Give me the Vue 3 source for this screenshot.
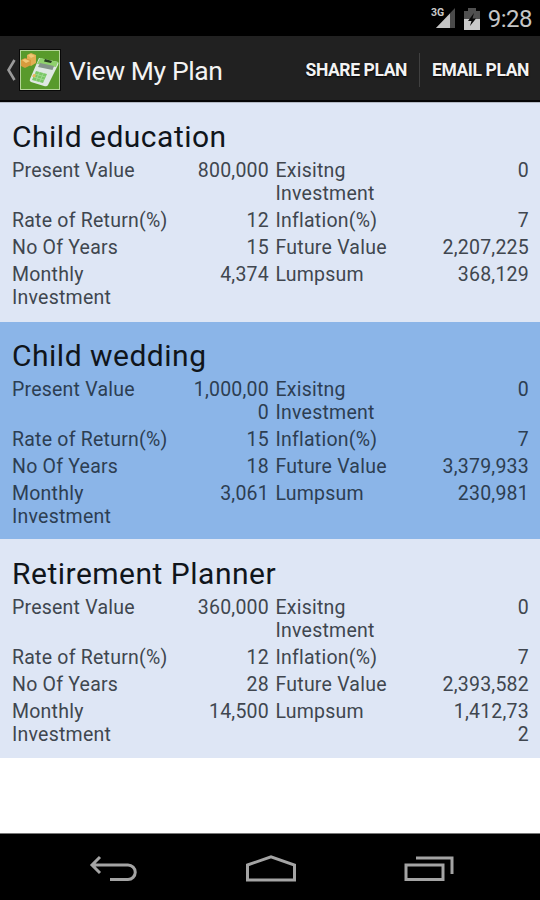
<template>
  <div class="screen">
    <header class="status-bar">
      <svg class="signal" width="26" height="24" viewBox="0 0 26 24">
        <path d="M5 21 L24 1 V21 Z" fill="#4a4a4a" />
        <path d="M5 21 L19 6.500 V21 Z" fill="#c4c4c4" />
        <text x="0" y="9" class="network">3G</text>
      </svg>
      <svg class="battery" width="16" height="22" viewBox="0 0 16 22">
        <path d="M4 0 H12 V3 H16 V11 H0 V3 H4 Z" fill="#505050" />
        <path d="M0 11 H16 V22 H0 Z" fill="#c9c9c9" />
        <path d="M10 5 L4 13 H7.500 L6 18 L12 10.500 H8.500 Z" fill="#080808" />
      </svg>
      <span class="clock">9:28</span>
    </header>

    <nav class="action-bar">
      <svg class="up" width="10" height="22" viewBox="0 0 10 22">
        <path d="M8.500 1 L2.500 11 L8.500 21" fill="none" stroke="#9a9a9a" stroke-width="2.600" />
      </svg>
      <svg class="logo" width="42" height="42" viewBox="0 0 42 42">
        <rect width="42" height="42" fill="#080808" />
        <rect x="1" y="1" width="40" height="40" fill="#b5d59a" />
        <rect x="2" y="2" width="38" height="38" fill="#589a2b" />
        <path d="M8 6 L12 4 L17 6 V14 L12 17 L8 14 Z" fill="#e2ae52" />
        <path d="M2 11 L6 9 L12 11 V16 L6 19 L2 17 Z" fill="#d69b3d" />
        <path d="M9 6 L12 5 L16 7 L12 9 Z M3 11 L6 10 L11 12 L7 14 Z" fill="#f0c977" />
        <path d="M20 9 L39 13 Q40 14 39 16 L29 36 Q28 38 25 37 L12 33 Q10 32 11 30 Z" fill="#dfe8e3" />
        <path d="M21 9 L39 13 L37 18 L18 15 Z" fill="#8fd16c" />
        <path d="M26 10 L33 12 L32 14 L25 12.500 Z" fill="#263d20" />
        <path d="M21 14 L35 17 L33.500 21 L19 18 Z" fill="#84958a" />
        <path d="M17 22 L28 25 L24 34 L13 31 Z" fill="#79c765" />
        <path d="M16 25 L26.500 28 M15 28 L25 31 M20.500 23 L17 32 M24.500 24 L20.500 33" stroke="#a5dc95" stroke-width=".8" />
        <path d="M14.500 25 L17 25.600 L16 28.500 L13 27.500 Z" fill="#e9b75d" />
      </svg>
      <h1 class="page-title">View My Plan</h1>
      <button class="action share">SHARE PLAN</button>
      <span class="divider" />
      <button class="action email">EMAIL PLAN</button>
    </nav>

    <main class="plans">
      <section v-for="(plan, i) in plans" :key="plan.name" class="plan" :class="{ alt: i % 2 === 1 }">
        <h2 class="plan-name">{{ plan.name }}</h2>
        <div v-for="row in plan.rows" :key="row[0]" class="row">
          <span class="label">{{ row[0] }}</span>
          <span class="value">{{ row[1] }}</span>
          <span class="label second">{{ row[2] }}</span>
          <span class="value">{{ row[3] }}</span>
        </div>
      </section>
    </main>

    <footer class="nav-bar">
      <svg width="48" height="28" viewBox="0 0 48 28">
        <path d="M11 2 L3 10 L11 18 M3 10 H39 A7 7 0 0 1 39 24.500 H21" class="nav-icon" />
      </svg>
      <svg width="52" height="28" viewBox="0 0 52 28">
        <path d="M2.500 10 L26 1.800 L49.500 10 V25 H2.500 Z" class="nav-icon" />
      </svg>
      <svg width="50" height="28" viewBox="0 0 50 28">
        <path d="M2 10 H39 V24.500 H2 Z M12 3 H48 V19" class="nav-icon" />
      </svg>
    </footer>
  </div>
</template>

<script setup>
const makeRows = (present, existing, rate, inflation, years, future, monthly, lumpsum) => [
  ['Present Value', present, 'Exisitng\nInvestment', existing],
  ['Rate of Return(%)', rate, 'Inflation(%)', inflation],
  ['No Of Years', years, 'Future Value', future],
  ['Monthly\nInvestment', monthly, 'Lumpsum', lumpsum],
]

const plans = [
  { name: 'Child education', rows: makeRows('800,000', '0', '12', '7', '15', '2,207,225', '4,374', '368,129') },
  { name: 'Child wedding', rows: makeRows('1,000,00\n0', '0', '15', '7', '18', '3,379,933', '3,061', '230,981') },
  { name: 'Retirement Planner', rows: makeRows('360,000', '0', '12', '7', '28', '2,393,582', '14,500', '1,412,73\n2') },
]
</script>

<style>
body { margin: 0; background: #fff; }
</style>

<style scoped>
.screen { display: flex; flex-direction: column; width: 540px; height: 900px; overflow: hidden; background: #fff; font-family: Roboto, sans-serif; }

.status-bar { display: flex; align-items: center; justify-content: flex-end; box-sizing: border-box; height: 36px; padding: 2px 8px 0 0; background: #000; }
.signal  { margin-right: 7px; }
.network { font-size: 10.500px; font-weight: 700; fill: #c9c9c9; }
.battery { margin-right: 8px; }
.clock   { font-size: 24px; letter-spacing: -.5px; color: #c6c6c6; }

.action-bar { display: flex; align-items: center; box-sizing: border-box; height: 66px; padding: 4px 11px 0 6px; background: #212121; border-bottom: 2px solid #060606; }
.up    { margin-right: 3px; }
.logo  { flex: none; }
.page-title { flex: 1; margin: 0 0 0 8px; font-size: 26.500px; font-weight: 400; letter-spacing: -.4px; color: #f3f3f3; white-space: nowrap; }
.action  { padding: 0; border: 0; background: none; font: 700 17.500px Roboto, sans-serif; letter-spacing: -.4px; color: #f3f3f3; text-shadow: 0 1px 2px #000; white-space: nowrap; }
.divider { width: 1px; height: 34px; margin: 0 12px; background: #404040; }

.plans { flex: 1; }
.plan  { box-sizing: border-box; height: 219px; padding: 16px 11px 0 12px; background: #dee6f5; }
.plan:first-child { height: 220px; border-top: 1px solid #b4bac5; padding-top: 15px; }
.plan.alt  { height: 217px; padding-top: 15px; background: #8bb5e8; }
.plan-name { margin: 0 0 4px; font-size: 30px; line-height: 37px; font-weight: 400; letter-spacing: .5px; color: #10151b; white-space: nowrap; }
.row   { display: grid; grid-template-columns: 180px 77px 164px 96px; margin-bottom: 4px; font-size: 19.500px; line-height: 23px; letter-spacing: .23px; color: #40464f; white-space: pre; }
.alt .row { color: #2d3e52; }
.second { padding-left: 6.500px; }
.value { text-align: right; }

.nav-bar { display: flex; align-items: center; justify-content: space-between; box-sizing: border-box; height: 67px; padding: 3px 86px 0 89px; background: #000; border-top: 1px solid #777; }
.nav-icon { fill: none; stroke: #a4a4a4; stroke-width: 3; }
</style>
